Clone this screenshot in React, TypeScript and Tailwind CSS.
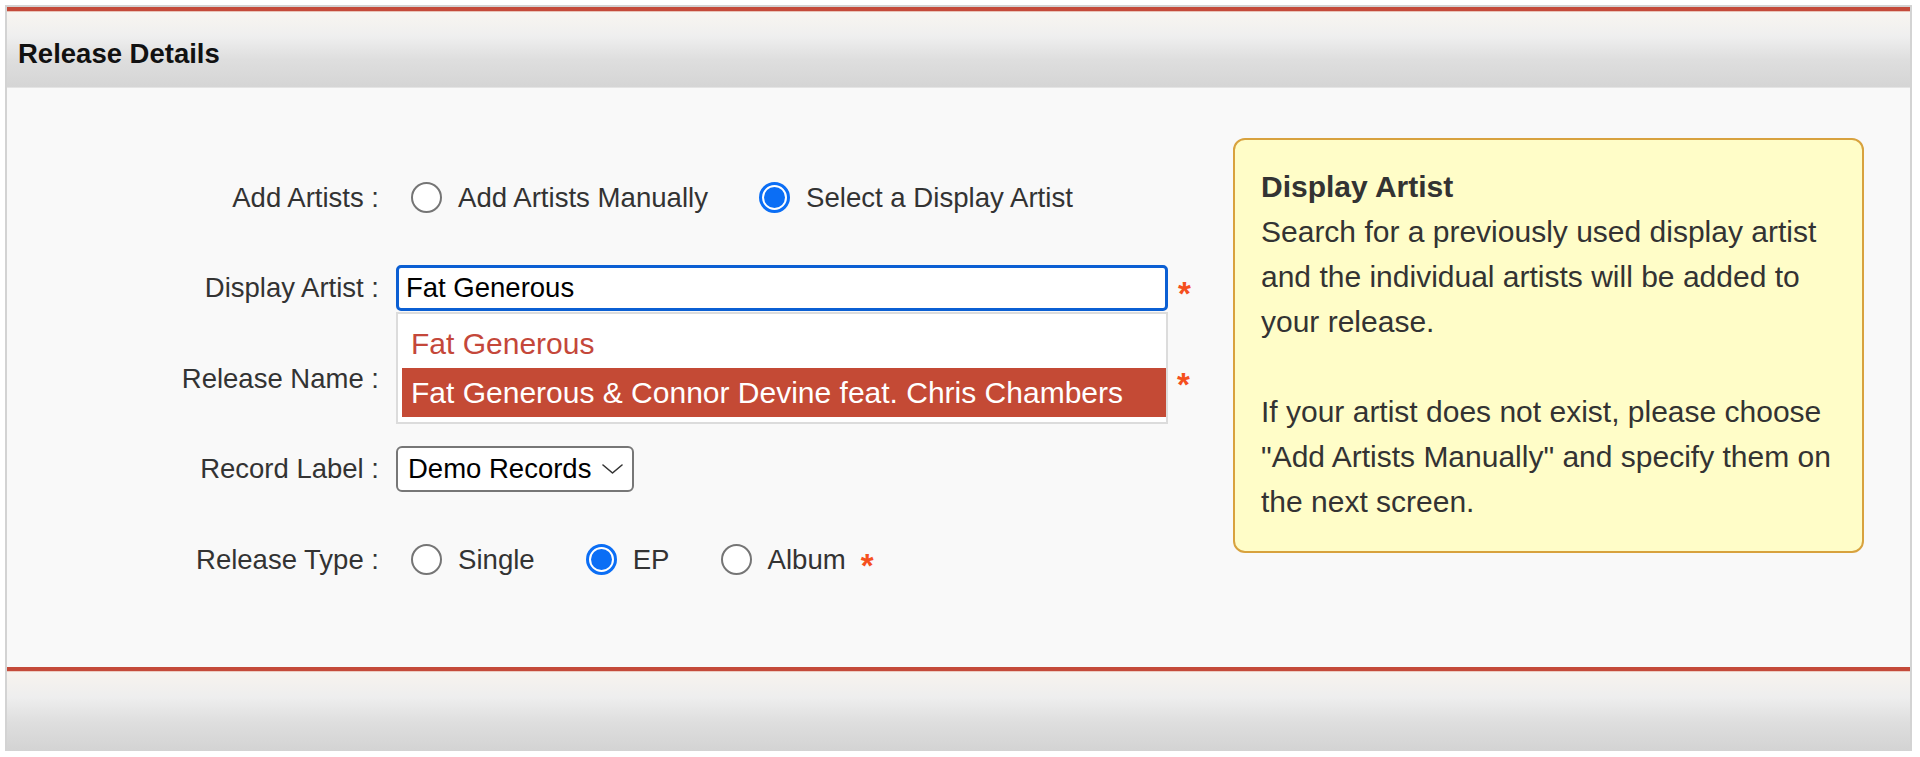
import React from "react";

function Radio({ checked }: { checked?: boolean }) {
  if (checked) {
    return (
      <span className="flex h-[31px] w-[31px] shrink-0 items-center justify-center rounded-full border-[3px] border-[#0b6ef5] bg-white">
        <span className="block h-[21px] w-[21px] rounded-full bg-[#0b6ef5]" />
      </span>
    );
  }
  return <span className="block h-[31px] w-[31px] shrink-0 rounded-full border-2 border-[#757575] bg-white" />;
}

function Option({ label, checked, first }: { label: string; checked?: boolean; first?: boolean }) {
  return (
    <div className={`flex items-center ${first ? "ml-[15px]" : "ml-[51px]"}`}>
      <Radio checked={checked} />
      <span className="ml-[16px] whitespace-nowrap text-[27.6px] text-[#333]">{label}</span>
    </div>
  );
}

function Asterisk({ className = "" }: { className?: string }) {
  return (
    <span className={`translate-y-[6px] text-[33px] font-bold leading-none text-[#f5501e] ${className}`}>*</span>
  );
}

function Row({ label, children }: { label: string; children: React.ReactNode }) {
  return (
    <div className="flex h-[90.5px] items-center">
      <div className="w-[372px] shrink-0 whitespace-nowrap text-right text-[#333]">{label}</div>
      <div className="ml-[17px] flex items-center">{children}</div>
    </div>
  );
}

export default function App() {
  return (
    <div className="h-[757px] w-[1920px] bg-white pl-[5px] pt-[5px] font-['Liberation_Sans',Arial,Helvetica,sans-serif] text-[27.5px]">
      <div className="w-[1907px] border-x-2 border-t-2 border-[#d3d3d3]">
        {/* top red rule */}
        <div className="h-[4px] bg-[#c44a3a]" />
        <div className="h-[1px] bg-[#e9c3b8]" />
        {/* header */}
        <div className="flex h-[76px] items-center border-b border-[#e4e4e4] bg-[linear-gradient(to_bottom,#f8f5f0_0%,#efefef_32%,#dedede_64%,#d5d5d5_100%)] pl-[11px] pt-[8px]">
          <h2 className="text-[27.5px] font-bold text-[#111]">Release Details</h2>
        </div>

        {/* body */}
        <div className="flex h-[579px] bg-[#f9f9f9] pt-[50px]">
          <div className="mt-[14px] w-[1226px] shrink-0">
            <Row label="Add Artists :">
              <Option label="Add Artists Manually" first />
              <Option label="Select a Display Artist" checked />
            </Row>

            <div className="relative z-10">
              <Row label="Display Artist :">
                <div className="relative">
                  <div className="flex h-[46px] w-[772px] items-center rounded-[5px] border-[3px] border-[#0b5fd3] bg-white pl-[7px] text-black">
                    Fat Generous
                  </div>
                  <div className="absolute left-0 top-[47px] w-[772px] border-2 border-[#dcdcdc] bg-white pb-[5px] pl-[4px] pt-[6px] text-[30px]">
                    <div className="flex h-[48px] items-center pl-[9px] text-[#c4473a]">Fat Generous</div>
                    <div className="flex h-[49px] items-center whitespace-nowrap bg-[#c44a35] pl-[9px] text-white">
                      Fat Generous &amp; Connor Devine feat. Chris Chambers
                    </div>
                  </div>
                </div>
                <Asterisk className="ml-[10px]" />
              </Row>
            </div>

            <Row label="Release Name :">
              <div className="h-[46px] w-[772px] rounded-[4px] border-2 border-[#9a9a9a] bg-white" />
              <Asterisk className="ml-[9px]" />
            </Row>

            <Row label="Record Label :">
              <div className="flex h-[46px] w-[238px] items-center justify-between rounded-[6px] border-2 border-[#777] bg-white pl-[10px] pr-[9px] text-black">
                <span className="whitespace-nowrap">Demo Records</span>
                <svg width="21" height="10" viewBox="0 0 21 10" fill="none">
                  <polyline points="1,1 10.5,9 20,1" stroke="#333" strokeWidth="1.6" strokeLinejoin="round" strokeLinecap="round" />
                </svg>
              </div>
            </Row>

            <Row label="Release Type :">
              <Option label="Single" first />
              <Option label="EP" checked />
              <Option label="Album" />
              <Asterisk className="ml-[15px]" />
            </Row>
          </div>

          <div className="h-[415px] w-[631px] shrink-0 rounded-[12px] border-2 border-[#d8a23e] bg-[#fffdc8] pb-[25px] pl-[26px] pt-[24px] text-[30px] leading-[45px] text-[#333]">
            <div className="font-bold">Display Artist</div>
            <div className="whitespace-nowrap">
              Search for a previously used display artist
              <br />
              and the individual artists will be added to
              <br />
              your release.
              <br />
              <br />
              If your artist does not exist, please choose
              <br />
              "Add Artists Manually" and specify them on
              <br />
              the next screen.
            </div>
          </div>
        </div>

        {/* bottom red rule */}
        <div className="h-[4px] bg-[#c44a3a]" />
        <div className="h-[1px] bg-[#ecccc2]" />
        {/* footer */}
        <div className="h-[79px] bg-[linear-gradient(to_bottom,#f7f3ee_0%,#eeeeee_32%,#dedede_64%,#d3d3d3_100%)]" />
      </div>
    </div>
  );
}
